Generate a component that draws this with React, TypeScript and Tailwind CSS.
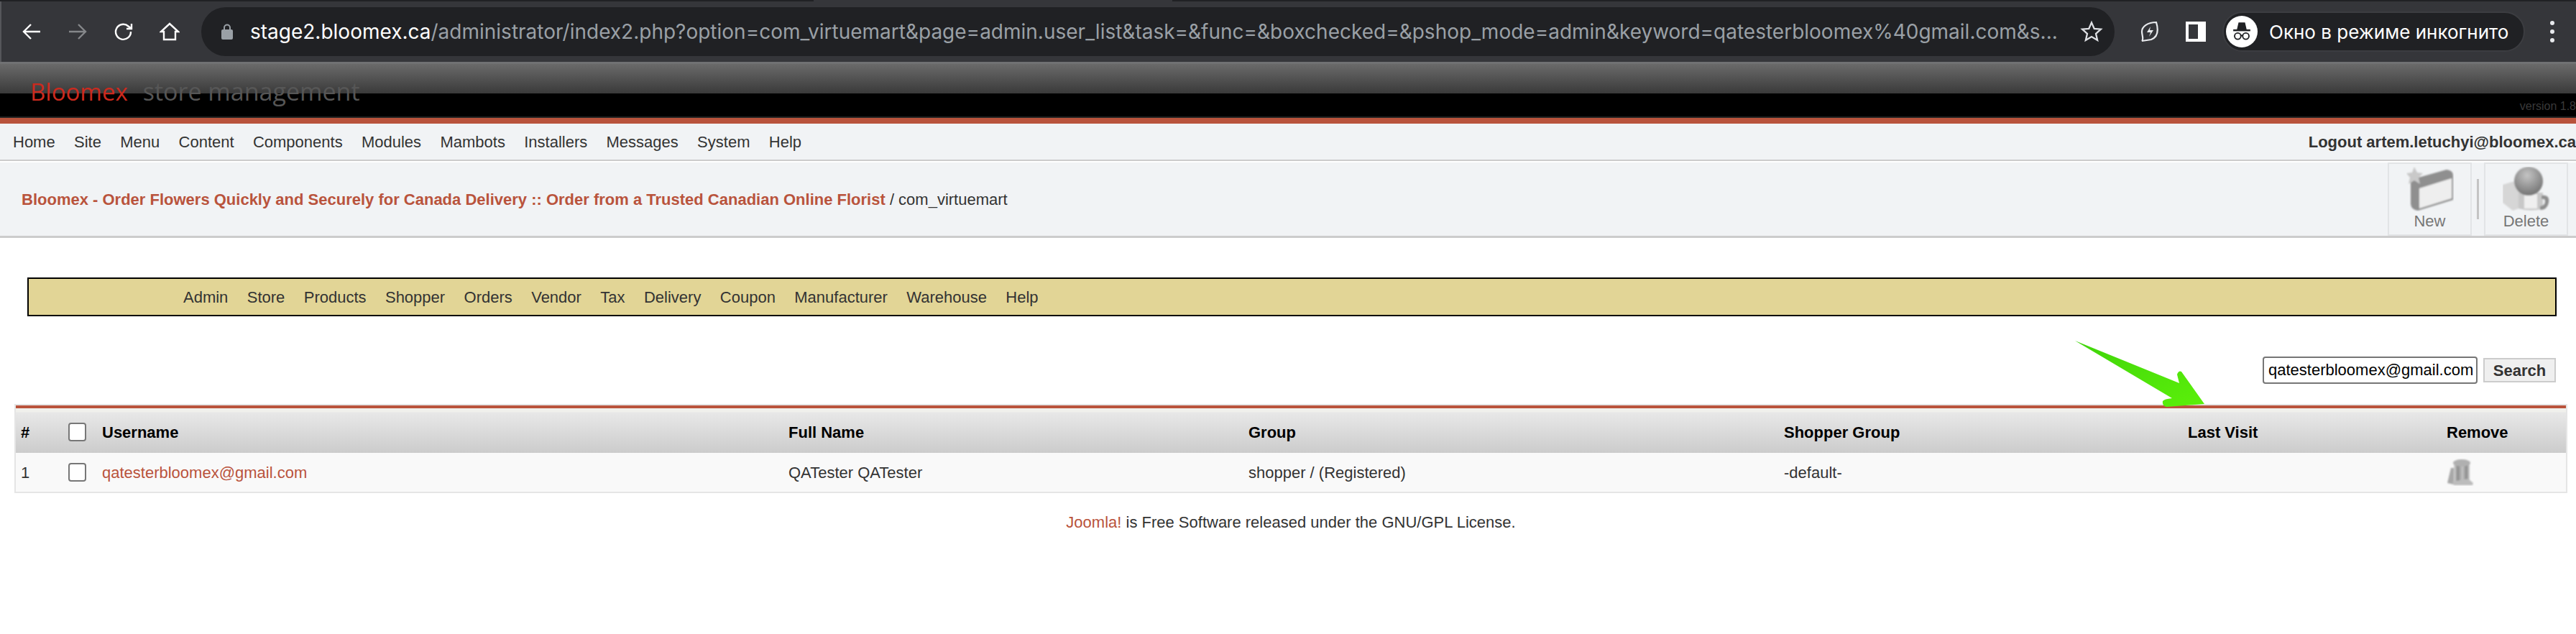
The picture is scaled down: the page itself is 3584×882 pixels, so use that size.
import React from "react";

const topMenu = ["Home", "Site", "Menu", "Content", "Components", "Modules", "Mambots", "Installers", "Messages", "System", "Help"];
const shopMenu = ["Admin", "Store", "Products", "Shopper", "Orders", "Vendor", "Tax", "Delivery", "Coupon", "Manufacturer", "Warehouse", "Help"];
const url = "/administrator/index2.php?option=com_virtuemart&page=admin.user_list&task=&func=&boxchecked=&pshop_mode=admin&keyword=qatesterbloomex%40gmail.com&s...";
const cols = "grid grid-cols-[66px_47px_955px_640px_745px_562px_360px_1fr] items-center pl-[7px]";

function NavIcon({ d, color = "#ffffff" }: { d: string; color?: string }) {
  return (
    <svg width="28" height="28" viewBox="0 0 28 28" fill="none" stroke={color} strokeWidth="2.4">
      <path d={d} />
    </svg>
  );
}

function NewIcon() {
  return (
    <svg width="66" height="62" viewBox="0 0 66 62">
      <defs>
        <filter id="blurNew"><feGaussianBlur stdDeviation="0.9" /></filter>
      </defs>
      <g filter="url(#blurNew)">
        <path d="M6 18 L56 4 Q65 5 65 12 L65 46 L16 61 Q7 60 6 52 Z" fill="#8f8f8f" />
        <path d="M18 30 L63 16 L63 44 L18 58 Z" fill="#eeeeee" />
        <path d="M11 0 L15 8 L23 9 L17 15 L19 24 L11 19 L3 24 L5 15 L0 9 L8 8 Z" fill="#c9c9c9" />
      </g>
    </svg>
  );
}

function DeleteIcon() {
  return (
    <svg width="66" height="62" viewBox="0 0 66 62">
      <defs>
        <filter id="blurDel"><feGaussianBlur stdDeviation="0.9" /></filter>
        <radialGradient id="ball" cx="0.45" cy="0.3" r="0.75">
          <stop offset="0" stopColor="#c4c4c4" />
          <stop offset="1" stopColor="#6f6f6f" />
        </radialGradient>
      </defs>
      <g filter="url(#blurDel)">
        <path d="M0 25 L20 19 L28 24 L28 56 L14 61 L0 50 Z" fill="#d6d6d6" />
        <path d="M22 36 L56 36 L56 58 Q40 63 22 58 Z" fill="#c8c8c8" />
        <path d="M30 38 L48 38 L48 58 L30 58 Z" fill="#efefef" />
        <path d="M54 40 Q66 38 64 50 Q62 60 52 60 L52 55 Q59 54 59 48 Q59 44 54 45 Z" fill="#8e8e8e" />
        <circle cx="36" cy="20" r="20" fill="url(#ball)" />
      </g>
    </svg>
  );
}

function TrashIcon() {
  return (
    <svg width="38" height="38" viewBox="0 0 38 38">
      <defs>
        <filter id="blurTrash"><feGaussianBlur stdDeviation="0.8" /></filter>
        <linearGradient id="can" x1="0" x2="1" y1="0" y2="0">
          <stop offset="0" stopColor="#d8d8d8" />
          <stop offset="0.25" stopColor="#8c8c8c" />
          <stop offset="0.55" stopColor="#c4c4c4" />
          <stop offset="0.8" stopColor="#8a8a8a" />
          <stop offset="1" stopColor="#cfcfcf" />
        </linearGradient>
      </defs>
      <g filter="url(#blurTrash)">
        <path d="M1 34 L6 13 L10 13 L10 36 Z" fill="#a8a8a8" />
        <path d="M10 6 L32 6 L32 32 L10 32 Z" fill="url(#can)" />
        <ellipse cx="21" cy="6" rx="12" ry="5" fill="#b0b0b0" />
        <path d="M8 32 L30 28 L37 34 L36 37 L10 37 Z" fill="#bcbcbc" />
      </g>
    </svg>
  );
}

export default function App() {
  return (
    <div className="relative w-[3584px] h-[882px] overflow-hidden bg-white font-['Liberation_Sans',Arial,sans-serif] text-[22px] text-[#333333]">
      {/* Browser chrome */}
      <div className="flex h-[2px]">
        <div className="w-[1132px] bg-[#202124]" />
        <div className="w-[499px] bg-[#35363a]" />
        <div className="flex-1 bg-[#202124]" />
      </div>
      <div className="flex h-[84px] items-center bg-[#35363a] border-l-2 border-[#55565a] font-['Inter',sans-serif]">
        <div className="flex items-center gap-[36px] ml-[28px] w-[250px]">
          <NavIcon d="M26 14H4M13 4L3 14L13 24" />
          <NavIcon d="M2 14H24M15 4L25 14L15 24" color="#85878a" />
          <NavIcon d="M24 14A10.5 10.5 0 1 1 20.5 6.5L25 10M25 3V10H18" />
          <NavIcon d="M14 3L2 14H6V25H22V14H26ZM6 25H22" />
        </div>
        <div className="flex items-center h-[68px] w-[2662px] rounded-full bg-[#202124] pl-[28px]">
          <svg width="16" height="22" viewBox="0 0 16 22" className="mr-[24px] shrink-0">
            <path d="M4 9V5.5a4 4 0 0 1 8 0V9" fill="none" stroke="#9aa0a6" strokeWidth="2" />
            <rect x="0" y="8" width="16" height="14" rx="2" fill="#9aa0a6" />
          </svg>
          <div className="text-[28px] whitespace-nowrap">
            <span className="text-white">stage2.bloomex.ca</span>
            <span className="text-[#9aa0a6]">{url}</span>
          </div>
          <svg width="32" height="32" viewBox="0 0 24 24" className="ml-auto mr-[16px]" fill="none" stroke="#dfe1e5" strokeWidth="1.7">
            <path d="M12 2.5l2.8 6.4 6.9.6-5.2 4.6 1.6 6.8L12 17.3l-6.1 3.6 1.6-6.8L2.3 9.5l6.9-.6z" />
          </svg>
        </div>
        <svg width="30" height="30" viewBox="0 0 30 30" className="ml-[34px]" fill="none" stroke="#e8eaed" strokeWidth="2.2">
          <path d="M24 2C27 12 27 22 17 26L4 28C7 26 4 20 4 15C4 8 12 2 24 2Z" />
          <path d="M16 8L11 16H16L14 22L20 13H15Z" fill="#e8eaed" stroke="none" />
        </svg>
        <div className="flex w-[28px] h-[28px] ml-[35px] bg-white pl-[4px] py-[4px] pr-[11px]">
          <div className="flex-1 bg-[#35363a]" />
        </div>
        <div className="flex items-center h-[56px] w-[421px] ml-[23px] rounded-full bg-[#202124] border-2 border-[#3c3d41] pl-[3px]">
          <div className="flex items-center justify-center w-[44px] h-[44px] rounded-full bg-white">
            <svg width="30" height="30" viewBox="0 0 24 24" fill="none" stroke="#202124" strokeWidth="1.5">
              <path d="M7.5 9L9 2.5H15L16.5 9Z" fill="#202124" />
              <path d="M2.5 10.5H21.5" strokeWidth="2" />
              <circle cx="7.5" cy="17" r="3.5" />
              <circle cx="16.5" cy="17" r="3.5" />
              <path d="M11 16.5Q12 15.8 13 16.5" />
            </svg>
          </div>
          <span className="ml-[16px] text-[26px] text-white whitespace-nowrap">Окно в режиме инкогнито</span>
        </div>
        <div className="flex flex-col gap-[6px] ml-[35px]">
          <div className="w-[6px] h-[6px] rounded-full bg-[#e8eaed]" />
          <div className="w-[6px] h-[6px] rounded-full bg-[#e8eaed]" />
          <div className="w-[6px] h-[6px] rounded-full bg-[#e8eaed]" />
        </div>
      </div>

      {/* Admin header */}
      <div className="h-[3px] bg-[#707173]" />
      <div className="flex items-start justify-between h-[75px] bg-[linear-gradient(to_bottom,#6a6a6a_0px,#3a3a3a_41px,#000000_41px,#000000_73px,#222222_73px)] pl-[42px] font-['Open_Sans',sans-serif]">
        <div className="flex items-baseline gap-[21px] leading-[76px] whitespace-nowrap">
          <span className="text-[33px] text-[#cc2a1e]">Bloomex</span>
          <span className="text-[34px] text-[#565656]">store management</span>
        </div>
        <span className="mt-[47px] text-[16px] leading-[24px] text-[#3a3a3a] whitespace-nowrap font-['Liberation_Sans',sans-serif]">version 1.8</span>
      </div>
      <div className="h-[8px] bg-[#b9533c]" />

      {/* Joomla top menu */}
      <div className="flex items-center justify-between h-[52px] bg-[#f1f3f5] border-b-2 border-[#cccccc] pl-[18px]">
        <div className="flex gap-[26.3px]">
          {topMenu.map((item) => (
            <span key={item}>{item}</span>
          ))}
        </div>
        <b>Logout artem.letuchyi@bloomex.ca</b>
      </div>

      {/* Title and toolbar */}
      <div className="flex items-center justify-between h-[105px] mt-[2px] bg-[#f1f3f5] border-b-[3px] border-[#cccccc] pl-[30px]">
        <div>
          <b className="text-[#b9533c]">Bloomex - Order Flowers Quickly and Securely for Canada Delivery :: Order from a Trusted Canadian Online Florist</b>
          <span> / com_virtuemart</span>
        </div>
        <div className="flex items-center self-start text-[#777777] mr-[11px]">
          <div className="flex flex-col items-center w-[117px] h-[102px] border-2 border-[#e2e4e6] pt-[4px]">
            <NewIcon />
            <span className="leading-[26px] mt-[1px]">New</span>
          </div>
          <div className="w-[3px] h-[56px] mx-[7px] bg-[#c4c4c4]" />
          <div className="flex flex-col items-center w-[117px] h-[102px] border-2 border-[#e2e4e6] pt-[4px]">
            <DeleteIcon />
            <span className="leading-[26px] mt-[1px]">Delete</span>
          </div>
        </div>
      </div>

      {/* VirtueMart menu */}
      <div className="flex items-center gap-[26.4px] h-[54px] w-[3519px] ml-[38px] mt-[55px] bg-[#e2d596] border-2 border-black pl-[215px]">
        {shopMenu.map((item) => (
          <span key={item}>{item}</span>
        ))}
      </div>

      {/* Search */}
      <div className="flex items-center justify-end gap-[8px] h-[38px] mt-[56px] pr-[28px]">
        <input
          readOnly
          value="qatesterbloomex@gmail.com"
          className="w-[299px] h-[38px] rounded-[4px] border-2 border-[#767676] bg-white pl-[6px] pr-0 text-[22px] text-black outline-none"
        />
        <div className="flex items-center justify-center w-[101px] h-[34px] bg-[#efefef] border-2 border-[#cccccc] font-bold">Search</div>
      </div>

      {/* Users table */}
      <div className="w-[3552px] ml-[20px] mt-[28px] border-2 border-[#e5e5e5]">
        <div className="h-[4px] bg-[#b9533c]" />
        <div className={`${cols} h-[62px] pt-[4px] bg-[linear-gradient(to_bottom,#f0f0ec_0px,#f0f0ec_5px,#e8e8e8_6px,#cccccc_100%)] font-bold text-black`}>
          <span>#</span>
          <div className="w-[25px] h-[26px] rounded-[4px] border-2 border-[#777777] bg-white" />
          <span>Username</span>
          <span>Full Name</span>
          <span>Group</span>
          <span>Shopper Group</span>
          <span>Last Visit</span>
          <span>Remove</span>
        </div>
        <div className={`${cols} h-[54px] bg-[#f9f9f9]`}>
          <span>1</span>
          <div className="w-[25px] h-[26px] rounded-[4px] border-2 border-[#777777] bg-white" />
          <span className="text-[#b9533c]">qatesterbloomex@gmail.com</span>
          <span>QATester QATester</span>
          <span>shopper / (Registered)</span>
          <span>-default-</span>
          <span />
          <TrashIcon />
        </div>
      </div>

      {/* Footer */}
      <div className="mt-[24px] pl-[8px] text-center">
        <span className="text-[#b9533c]">Joomla!</span> is Free Software released under the GNU/GPL License.
      </div>

      {/* Annotation arrow */}
      <svg className="absolute left-[2880px] top-[470px]" width="200" height="100" viewBox="2880 470 200 100">
        <defs>
          <linearGradient id="arrowFill" x1="0" y1="0" x2="1" y2="1">
            <stop offset="0" stopColor="#3fd40a" />
            <stop offset="1" stopColor="#5cf00a" />
          </linearGradient>
        </defs>
        <path
          d="M2887 474 L3032 533 L3029 521 Q3031 515 3035 517 L3067 562 L3014 566 Q3008 564 3009 558 Q3011 555 3022 554 Z"
          fill="url(#arrowFill)"
        />
      </svg>
    </div>
  );
}
